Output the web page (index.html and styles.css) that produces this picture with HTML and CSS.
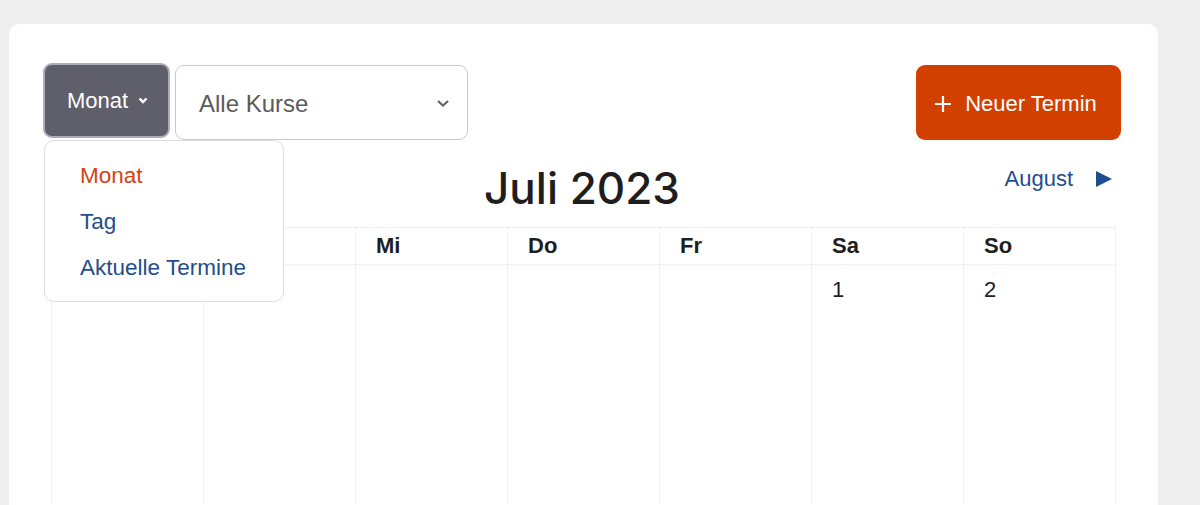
FILE: index.html
```html
<!DOCTYPE html>
<html lang="de">
<head>
  <meta charset="UTF-8" />
  <meta name="viewport" content="width=device-width, initial-scale=1.0" />
  <title>Kalender</title>
  <link rel="stylesheet" href="styles.css">
</head>
<body>
  <div class="card">
    <div class="toolbar">
      <div class="view-switch">
        <button class="view-btn">Monat
          <svg width="10" height="7" viewBox="0 0 10 7"><path d="M1.5 1.5l3.5 3.5l3.5-3.5" fill="none" stroke="#fff" stroke-width="2.4"/></svg>
        </button>
        <ul class="view-menu">
          <li class="active">Monat</li>
          <li>Tag</li>
          <li>Aktuelle Termine</li>
        </ul>
      </div>
      <div class="course-select">
        <span>Alle Kurse</span>
        <svg width="12" height="7" viewBox="0 0 12 7"><path d="M1 1l5 4.5L11 1" fill="none" stroke="#5f6370" stroke-width="2.2"/></svg>
      </div>
      <button class="new-btn">
        <svg width="18" height="18" viewBox="0 0 18 18"><path d="M9 1v16M1 9h16" stroke="#fff" stroke-width="2.2"/></svg>
        Neuer Termin
      </button>
    </div>

    <div class="month-head">
      <span></span>
      <h1>Juli 2023</h1>
      <a class="next" href="#">August
        <svg width="16" height="16" viewBox="0 0 16 16"><path d="M0 0L16 8L0 16Z" fill="#1f4e8c"/></svg>
      </a>
    </div>

    <table class="calendar">
      <thead>
        <tr><th>Mo</th><th>Di</th><th>Mi</th><th>Do</th><th>Fr</th><th>Sa</th><th>So</th></tr>
      </thead>
      <tbody>
        <tr><td></td><td></td><td></td><td></td><td></td><td>1</td><td>2</td></tr>
      </tbody>
    </table>
  </div>
</body>
</html>
```

FILE: styles.css
```css
body {
  margin: 0;
  background: #eeeeee;
  font-family: "Liberation Sans", Arial, sans-serif;
  color: #1e1e1e;
}
.card {
  background: #fff;
  margin: 24px 42px 0 9px;
  padding: 39px 37px 0 34px;
  border-radius: 10px 10px 0 0;
  min-height: 500px;
  box-sizing: border-box;
}
.toolbar {
  display: flex;
  align-items: flex-start;
  gap: 5px;
}
.view-switch {
  position: relative;
}
.view-btn {
  width: 127px;
  height: 75px;
  background: #5f5e6b;
  border: 2px solid #aeadb5;
  border-radius: 9px;
  color: #fff;
  font-family: inherit;
  font-size: 22px;
  display: flex;
  align-items: center;
  justify-content: center;
  gap: 10px;
  padding: 0 0 0 2px;
}
.view-menu {
  position: absolute;
  top: 77px;
  left: 1px;
  width: 240px;
  height: 162px;
  box-sizing: border-box;
  margin: 0;
  padding: 12px 0 0 35px;
  list-style: none;
  background: #fff;
  border: 1px solid #dedede;
  border-radius: 10px;
  z-index: 2;
}
.view-menu li {
  font-size: 22.5px;
  line-height: 46px;
  color: #1f4e8c;
}
.view-menu li.active {
  color: #d24412;
}
.course-select {
  margin-top: 2px;
  width: 293px;
  height: 75px;
  box-sizing: border-box;
  border: 1px solid #c8c8c8;
  border-radius: 9px;
  display: flex;
  align-items: center;
  justify-content: space-between;
  padding: 2px 18px 0 23px;
  font-size: 24px;
  color: #5a5a5a;
}
.new-btn {
  margin: 2px 0 0 auto;
  width: 205px;
  height: 75px;
  background: #d24000;
  border: none;
  border-radius: 9px;
  color: #fff;
  font-family: inherit;
  font-size: 22px;
  display: flex;
  align-items: center;
  justify-content: center;
  gap: 13px;
  padding: 2px 0 0 4px;
}
.new-btn svg {
  margin-left: -10px;
}
.month-head {
  display: grid;
  grid-template-columns: 1fr auto 1fr;
  align-items: center;
  height: 87px;
}
.month-head h1 {
  margin: 8px 0 0;
  font-family: Inter, "Liberation Sans", sans-serif;
  font-weight: 500;
  font-size: 44px;
}
.next {
  justify-self: end;
  margin-right: 9px;
  color: #1f4e8c;
  text-decoration: none;
  font-size: 22px;
  display: flex;
  align-items: center;
  gap: 23px;
  margin-bottom: 10px;
}
.calendar {
  margin: 0 5px 0 8px;
  width: calc(100% - 13px);
  border-collapse: collapse;
  table-layout: fixed;
}
.calendar th, .calendar td {
  border: 1px dotted #e6e6e6;
  text-align: left;
  padding: 0 0 0 20px;
  font-size: 22px;
  vertical-align: top;
}
.calendar th {
  height: 36px;
  vertical-align: middle;
  font-weight: bold;
}
.calendar td {
  height: 260px;
  padding-top: 12px;
}
```
